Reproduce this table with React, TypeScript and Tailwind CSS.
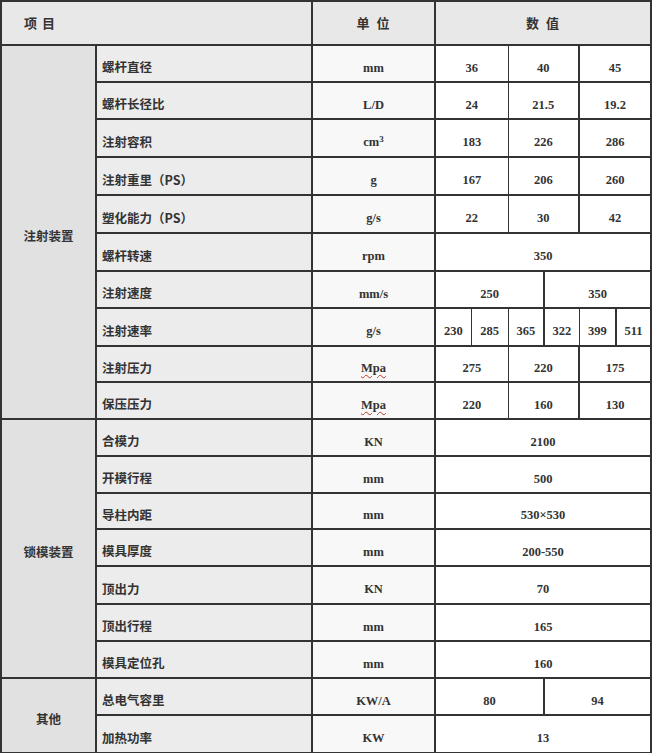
const cjk = { fontFamily: '"Noto Sans CJK SC", "Noto Sans", sans-serif' };
const serif = { fontFamily: '"Liberation Serif", "Noto Sans CJK SC", serif' };

type Val = [string, number, boolean?]; // text, colspan, thick left border

type Row = { item: string; unit: React.ReactNode; h: number; values: Val[] };

const three = (a: string, b: string, c: string): Val[] => [
  [a, 2],
  [b, 2],
  [c, 2, true],
];
const two = (a: string, b: string): Val[] => [
  [a, 3],
  [b, 3, true],
];
const one = (a: string): Val[] => [[a, 6]];

const Mpa = (
  <span
    className="underline decoration-wavy decoration-[#c0392b] decoration-1 underline-offset-2"
    style={serif}
  >
    Mpa
  </span>
);

const groups: { name: string; rows: Row[] }[] = [
  {
    name: "注射装置",
    rows: [
      { item: "螺杆直径", unit: "mm", h: 37, values: three("36", "40", "45") },
      { item: "螺杆长径比", unit: "L/D", h: 37, values: three("24", "21.5", "19.2") },
      {
        item: "注射容积",
        unit: (
          <span>
            cm<sup className="text-[9px]">3</sup>
          </span>
        ),
        h: 38,
        values: three("183", "226", "286"),
      },
      { item: "注射重里（PS）", unit: "g", h: 38, values: three("167", "206", "260") },
      { item: "塑化能力（PS）", unit: "g/s", h: 38, values: three("22", "30", "42") },
      { item: "螺杆转速", unit: "rpm", h: 38, values: one("350") },
      { item: "注射速度", unit: "mm/s", h: 37, values: two("250", "350") },
      {
        item: "注射速率",
        unit: "g/s",
        h: 38,
        values: [
          ["230", 1],
          ["285", 1],
          ["365", 1],
          ["322", 1, true],
          ["399", 1],
          ["511", 1, true],
        ],
      },
      { item: "注射压力", unit: Mpa, h: 36, values: three("275", "220", "175") },
      { item: "保压压力", unit: Mpa, h: 37, values: three("220", "160", "130") },
    ],
  },
  {
    name: "锁模装置",
    rows: [
      { item: "合模力", unit: "KN", h: 37, values: one("2100") },
      { item: "开模行程", unit: "mm", h: 37, values: one("500") },
      { item: "导柱内距", unit: "mm", h: 36, values: one("530×530") },
      { item: "模具厚度", unit: "mm", h: 37, values: one("200-550") },
      { item: "顶出力", unit: "KN", h: 38, values: one("70") },
      { item: "顶出行程", unit: "mm", h: 37, values: one("165") },
      { item: "模具定位孔", unit: "mm", h: 37, values: one("160") },
    ],
  },
  {
    name: "其他",
    rows: [
      { item: "总电气容里", unit: "KW/A", h: 37, values: two("80", "94") },
      { item: "加热功率", unit: "KW", h: 38, values: one("13") },
    ],
  },
];

const line = "border-[#333]";

export default function App() {
  return (
    <div className="w-[652px] h-[753px] bg-white">
      <table className="w-[652px] table-fixed border-collapse border-2 border-[#333] text-[#333]">
        <colgroup>
          <col className="w-[95px]" />
          <col className="w-[216px]" />
          <col className="w-[123px]" />
          <col className="w-[36px]" />
          <col className="w-[37px]" />
          <col className="w-[36px]" />
          <col className="w-[35px]" />
          <col className="w-[37px]" />
          <col className="w-[35px]" />
        </colgroup>
        <thead>
          <tr className="h-[44px] bg-[#e8e8e8]">
            <th
              colSpan={2}
              className={`border-2 ${line} pl-[22px] text-left text-[13px] font-bold tracking-[5px]`}
              style={cjk}
            >
              项目
            </th>
            <th className={`border-2 ${line} pl-[6px] text-center text-[13px] font-bold tracking-[7px]`} style={cjk}>
              单位
            </th>
            <th
              colSpan={6}
              className={`border-2 ${line} pl-[6px] text-center text-[13px] font-bold tracking-[7px]`}
              style={cjk}
            >
              数值
            </th>
          </tr>
        </thead>
        <tbody>
          {groups.map((g) =>
            g.rows.map((r, i) => (
              <tr key={g.name + r.item} style={{ height: r.h }}>
                {i === 0 && (
                  <td
                    rowSpan={g.rows.length}
                    className={`border-2 ${line} bg-[#e1e1e1] pt-[8px] text-center align-middle text-[12.5px] font-bold`}
                    style={cjk}
                  >
                    {g.name}
                  </td>
                )}
                <td
                  className={`border-2 ${line} bg-[#ececec] pt-[8px] pl-[5px] text-left align-middle text-[12.5px] font-bold`}
                  style={cjk}
                >
                  {r.item}
                </td>
                <td
                  className={`border-2 ${line} bg-[#f8f8f8] pt-[9px] text-center align-middle text-[12.5px] font-bold`}
                  style={serif}
                >
                  {r.unit}
                </td>
                {r.values.map(([v, span, thick], j) => (
                  <td
                    key={j}
                    colSpan={span}
                    className={`${line} border-y-2 ${j === 0 || thick ? "border-l-2" : "border-l"} ${
                      j === r.values.length - 1 ? "border-r-2" : "border-r"
                    } bg-white pt-[9px] text-center align-middle text-[12.5px] font-bold`}
                    style={serif}
                  >
                    {v}
                  </td>
                ))}
              </tr>
            ))
          )}
        </tbody>
      </table>
    </div>
  );
}
